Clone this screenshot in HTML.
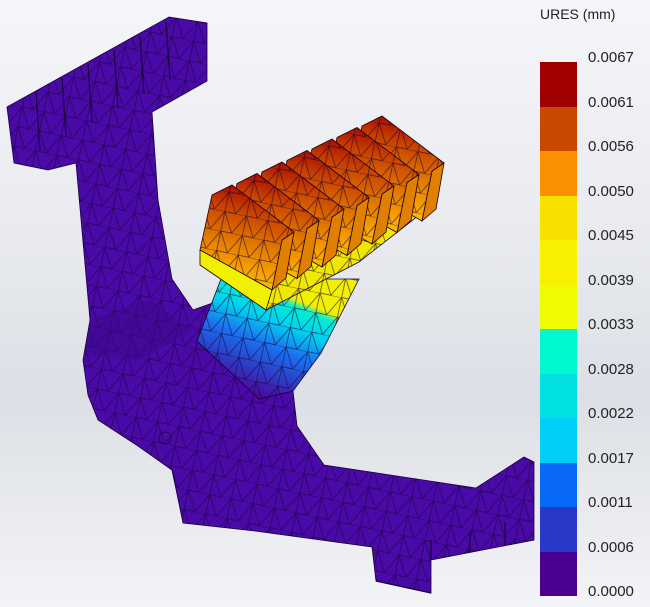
<!DOCTYPE html>
<html><head><meta charset="utf-8"><style>
html,body{margin:0;padding:0}
body{width:650px;height:607px;overflow:hidden;position:relative;background:linear-gradient(#f5f6f9 0%,#e8eaef 40%,#dcdfe5 65%,#f3f4f7 100%);font-family:"Liberation Sans",sans-serif}
.lab{position:absolute;left:588px;font-size:15px;color:#222;line-height:15px}
</style></head><body>
<svg width="650" height="607" style="position:absolute;left:0;top:0">
<defs>
<pattern id="mesh" width="22" height="20" patternUnits="userSpaceOnUse" patternTransform="rotate(12)">
<path d="M0 0L22 0L11 20ZM0 0L0 20L11 20M22 0L22 20" fill="none" stroke="#1a0038" stroke-width="0.7" opacity="0.75"/>
</pattern>
<linearGradient id="col" x1="300" y1="285" x2="255" y2="400" gradientUnits="userSpaceOnUse">
<stop offset="0" stop-color="#f0f000"/><stop offset="0.12" stop-color="#f0f000"/>
<stop offset="0.18" stop-color="#00f0d0"/><stop offset="0.35" stop-color="#00d0f0"/>
<stop offset="0.55" stop-color="#1a70f0"/><stop offset="0.75" stop-color="#2a40c8"/>
<stop offset="0.95" stop-color="#4a0aa0"/>
</linearGradient>
<linearGradient id="face" x1="0.6" y1="0" x2="0.4" y2="1">
<stop offset="0" stop-color="#a00000"/><stop offset="0.25" stop-color="#c84000"/>
<stop offset="0.55" stop-color="#e07800"/><stop offset="0.8" stop-color="#f8a000"/><stop offset="1" stop-color="#f8d000"/>
</linearGradient>
</defs>
<g stroke="#1a0038" stroke-width="0.8">
<path fill="#4a0aa8" d="M7,107 L169,17 L207,23 L207,81 L152,112 L158,200 L172,279 L193,310 L221,300 L197,341 L259,399 L293,391 L297,426 L324,465 L476,488 L524,457 L534,462 L534,540 L431,560 L431,593 L376,581 L372,547 L255,531 L183,523 L172,470 L138,446 L98,420 L88,395 L83,360 L90,320 L76,163 L48,170 L14,163 Z"/>
<path fill="url(#mesh)" stroke="none" d="M7,107 L169,17 L207,23 L207,81 L152,112 L158,200 L172,279 L193,310 L221,300 L197,341 L259,399 L293,391 L297,426 L324,465 L476,488 L524,457 L534,462 L534,540 L431,560 L431,593 L376,581 L372,547 L255,531 L183,523 L172,470 L138,446 L98,420 L88,395 L83,360 L90,320 L76,163 L48,170 L14,163 Z"/>
<g fill="none" stroke="#1a0038" stroke-width="1.2">
<path d="M36,92 L40,150 M62,78 L66,136 M88,64 L92,122 M114,50 L118,108 M140,36 L144,94 M166,22 L170,80"/>
</g>
<path fill="none" stroke-width="1.2" d="M431,560 L431,540 M470,552 L470,532 M505,545 L505,522 M376,581 L431,593"/>
<path fill="#3a0888" stroke="none" opacity="0.5" d="M90,320 L150,300 L193,330 L140,360 L85,355Z"/>
<circle cx="165" cy="438" r="6" fill="none" stroke="#1a0038"/>
<path fill="url(#col)" d="M221,279 L359,279 L321,353 L293,391 L259,399 L197,341 Z"/>
<path fill="url(#mesh)" stroke="none" d="M221,279 L359,279 L321,353 L293,391 L259,399 L197,341 Z"/>
<path fill="#f0e800" d="M200,262 L266,310 L359,262 L432,205 L440,178 L300,240 L215,215 Z"/>
<path fill="url(#mesh)" stroke="none" d="M200,262 L266,310 L359,262 L432,205 L440,178 L300,240 L215,215 Z"/>
<g stroke="#200010">
<g transform="translate(150,-69)"><path fill="#e08000" d="M282,240 L294,232 L286,278 L272,290Z"/><path fill="url(#face)" d="M212,195 L232,185 L294,232 L282,240 L272,290 L200,250Z"/><path fill="url(#mesh)" stroke="none" d="M212,195 L232,185 L294,232 L282,240 L272,290 L200,250Z"/></g>
<g transform="translate(125,-57.5)"><path fill="#e08000" d="M282,240 L294,232 L286,278 L272,290Z"/><path fill="url(#face)" d="M212,195 L232,185 L294,232 L282,240 L272,290 L200,250Z"/><path fill="url(#mesh)" stroke="none" d="M212,195 L232,185 L294,232 L282,240 L272,290 L200,250Z"/></g>
<g transform="translate(100,-46)"><path fill="#e08000" d="M282,240 L294,232 L286,278 L272,290Z"/><path fill="url(#face)" d="M212,195 L232,185 L294,232 L282,240 L272,290 L200,250Z"/><path fill="url(#mesh)" stroke="none" d="M212,195 L232,185 L294,232 L282,240 L272,290 L200,250Z"/></g>
<g transform="translate(75,-34.5)"><path fill="#e08000" d="M282,240 L294,232 L286,278 L272,290Z"/><path fill="url(#face)" d="M212,195 L232,185 L294,232 L282,240 L272,290 L200,250Z"/><path fill="url(#mesh)" stroke="none" d="M212,195 L232,185 L294,232 L282,240 L272,290 L200,250Z"/></g>
<g transform="translate(50,-23)"><path fill="#e08000" d="M282,240 L294,232 L286,278 L272,290Z"/><path fill="url(#face)" d="M212,195 L232,185 L294,232 L282,240 L272,290 L200,250Z"/><path fill="url(#mesh)" stroke="none" d="M212,195 L232,185 L294,232 L282,240 L272,290 L200,250Z"/></g>
<g transform="translate(25,-11.5)"><path fill="#e08000" d="M282,240 L294,232 L286,278 L272,290Z"/><path fill="url(#face)" d="M212,195 L232,185 L294,232 L282,240 L272,290 L200,250Z"/><path fill="url(#mesh)" stroke="none" d="M212,195 L232,185 L294,232 L282,240 L272,290 L200,250Z"/></g>
<g><path fill="#e08000" d="M282,240 L294,232 L286,278 L272,290Z"/><path fill="url(#face)" d="M212,195 L232,185 L294,232 L282,240 L272,290 L200,250Z"/><path fill="url(#mesh)" stroke="none" d="M212,195 L232,185 L294,232 L282,240 L272,290 L200,250Z"/></g>
</g>
<path fill="#f0f000" stroke="#200010" d="M200,250 L272,290 L266,310 L200,265Z"/>
</g>
</svg>
<div style="position:absolute;left:540px;top:6px;font-size:14px;color:#222">URES (mm)</div>
<div style="position:absolute;left:540px;top:62px;width:37px;height:534px;display:flex;flex-direction:column">
<div style="flex:1;background:#a00000"></div><div style="flex:1;background:#c84800"></div>
<div style="flex:1;background:#f89000"></div><div style="flex:1;background:#f8e000"></div>
<div style="flex:1;background:#f8f000"></div><div style="flex:1;background:#f0fa00"></div>
<div style="flex:1;background:#00f8d0"></div><div style="flex:1;background:#00e0e0"></div>
<div style="flex:1;background:#00d0f8"></div><div style="flex:1;background:#0868f8"></div>
<div style="flex:1;background:#2838c8"></div><div style="flex:1;background:#4a0090"></div>
</div>
<div class="lab" style="top:50px">0.0067</div>
<div class="lab" style="top:95px">0.0061</div>
<div class="lab" style="top:139px">0.0056</div>
<div class="lab" style="top:184px">0.0050</div>
<div class="lab" style="top:228px">0.0045</div>
<div class="lab" style="top:273px">0.0039</div>
<div class="lab" style="top:317px">0.0033</div>
<div class="lab" style="top:362px">0.0028</div>
<div class="lab" style="top:406px">0.0022</div>
<div class="lab" style="top:451px">0.0017</div>
<div class="lab" style="top:495px">0.0011</div>
<div class="lab" style="top:540px">0.0006</div>
<div class="lab" style="top:584px">0.0000</div>
</body></html>
